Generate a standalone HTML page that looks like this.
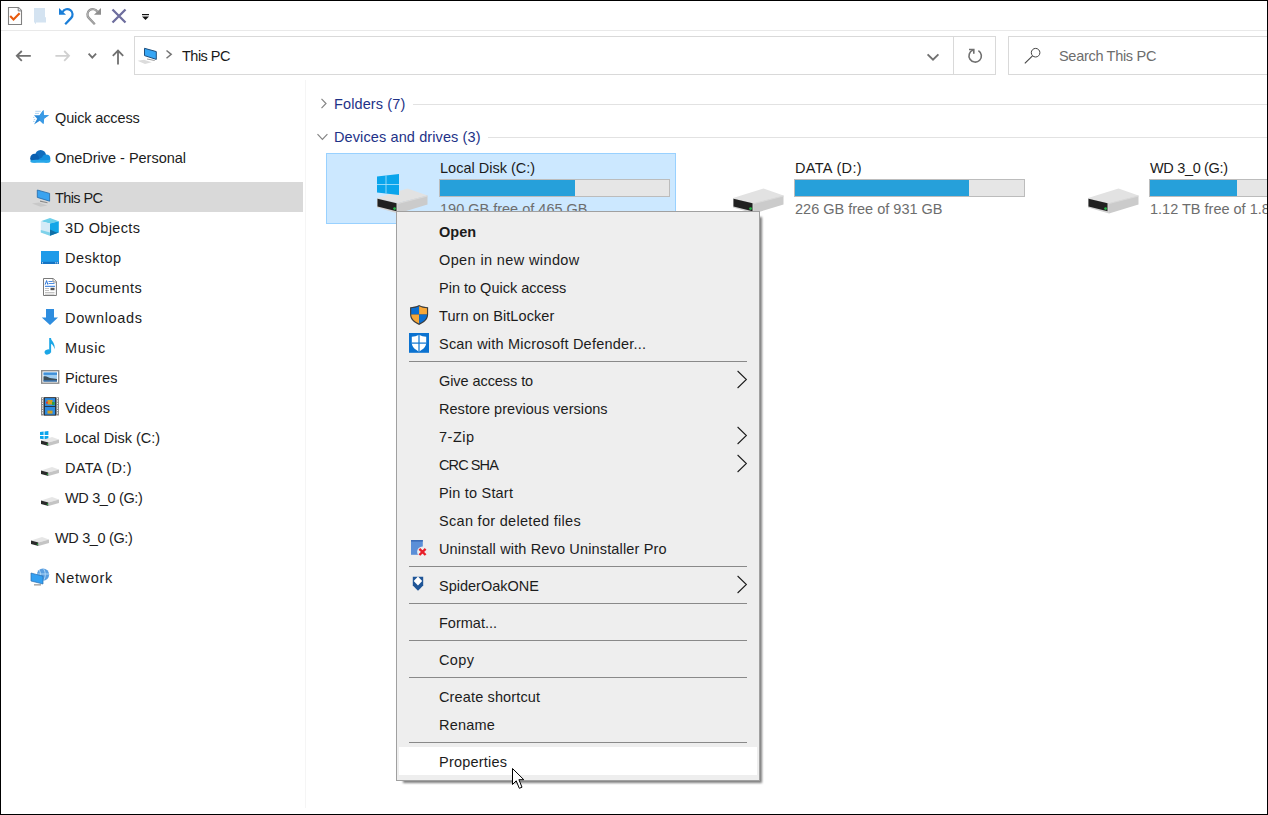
<!DOCTYPE html>
<html><head><meta charset="utf-8">
<style>
*{box-sizing:border-box}
html,body{margin:0;padding:0}
body{width:1268px;height:815px;overflow:hidden;position:relative;background:#fff;font-family:"Liberation Sans",sans-serif;font-size:14.5px;color:#1c1c1c}
.a{position:absolute}
.t{position:absolute;white-space:nowrap;line-height:20px;height:20px}
svg{position:absolute;overflow:visible}
.mz{z-index:11}
.cz{z-index:20}
.frame{position:absolute;left:0;top:0;width:1268px;height:815px;border:1px solid #000;pointer-events:none;z-index:50}
</style></head>
<body>
<div class="a" style="left:1px;top:30px;width:1266px;height:1px;background:#e9e9e9"></div>
<svg style="left:0px;top:0px" width="160" height="30" viewBox="0 0 160 30">
<path d="M8.5,7.5 H18.5 L21.5,10.5 V24.5 H8.5 Z" fill="#fff" stroke="#808080" stroke-width="1.1"/>
<path d="M18.2,7.6 V10.9 H21.5" fill="#e8e8f0" stroke="#808080" stroke-width="1"/>
<polyline points="10.2,16 13.5,19.4 19.6,13.2" fill="none" stroke="#e8590c" stroke-width="2.1"/>
<path d="M34,8 H45 V17.2 H46 V22.5 H36 V23.8 H35 V22.5 H34 Z" fill="#d4e3f1"/>
<polygon points="59,8 59,14.8 66,14.8" fill="#1a7ed8"/>
<path d="M62.6,11.9 A5.3,5.3 0 1 1 71.04,18.14 L65.2,24.3" fill="none" stroke="#1a7ed8" stroke-width="2.2"/>
<polygon points="101,8 101,14.8 94,14.8" fill="#8e8e8e"/>
<path d="M97.4,11.9 A5.3,5.3 0 1 0 88.96,18.14 L94.8,24.3" fill="none" stroke="#8e8e8e" stroke-width="2.3"/><path d="M97.4,11.9 A5.3,5.3 0 1 0 88.96,18.14 L94.8,24.3" fill="none" stroke="#c4c4c4" stroke-width="0.7"/>
<path d="M112.5,9.5 L125.5,22.5 M125.5,9.5 L112.5,22.5" stroke="#6e6e9e" stroke-width="2.3"/>
<rect x="142" y="14" width="7" height="1.2" fill="#111"/>
<polygon points="142,16.5 149,16.5 145.5,20" fill="#111"/>
</svg>
<svg style="left:0px;top:40px" width="134" height="30" viewBox="0 0 134 30">
<path d="M16.5,15.8 H30.8 M21.8,11 L16.8,15.8 L21.8,20.8" fill="none" stroke="#707070" stroke-width="1.8"/>
<path d="M69,15.8 H55.4 M64.2,11 L69,15.8 L64.2,20.8" fill="none" stroke="#d0d0d0" stroke-width="1.8"/>
<path d="M88.6,13.6 L92.3,17.6 L96.1,13.6" fill="none" stroke="#707070" stroke-width="1.8"/>
<path d="M118,10.6 V24.6 M112.8,15.8 L118,10.6 L123.2,15.8" fill="none" stroke="#707070" stroke-width="1.8"/>
</svg>
<div class="a" style="left:134px;top:36px;width:862px;height:39px;border:1px solid #d9d9d9"></div>
<div class="a" style="left:953px;top:36px;width:1px;height:39px;background:#d9d9d9"></div>
<div class="a" style="left:1008px;top:36px;width:270px;height:39px;border:1px solid #d9d9d9"></div>
<svg style="left:134px;top:40px" width="50" height="30" viewBox="0 0 50 30">
<polygon points="3.5,20.8 10,19.8 17.8,22.3 11,24" fill="#dcdcdc"/>
<polygon points="13,18.4 20.7,20 20.7,21 13,19.6" fill="#9a9a9a"/>
<polygon points="10.5,8.3 22.3,11.6 22.3,19.4 10.5,15.6" fill="#35a6f5" stroke="#1e4f7e" stroke-width="1"/>
<path d="M32.5,10.5 L37.2,14.3 L32.5,18.3" fill="none" stroke="#767676" stroke-width="1.5"/>
</svg>
<div class="t" style="left:182px;top:46px;color:#1a1a1a;letter-spacing:-0.52px">This PC</div>
<svg style="left:900px;top:36px" width="110" height="39" viewBox="0 0 110 39">
<path d="M27.6,18.4 L33,23.6 L38.4,18.4" fill="none" stroke="#707070" stroke-width="1.9"/>
<path d="M78.4,14.6 A6.2,6.2 0 1 1 73,14.1" fill="none" stroke="#707070" stroke-width="1.6"/>
<polyline points="69,13.5 73.8,13.5 73.8,17.8" fill="none" stroke="#707070" stroke-width="1.6"/>
</svg>
<svg style="left:1020px;top:40px" width="40" height="30" viewBox="0 0 40 30">
<circle cx="15.6" cy="12.7" r="4.3" fill="none" stroke="#444" stroke-width="1"/>
<line x1="12.5" y1="15.8" x2="4.8" y2="23.4" stroke="#444" stroke-width="1.1"/>
</svg>
<div class="t" style="left:1059px;top:46px;color:#6d6d6d;letter-spacing:-0.3px">Search This PC</div>
<div class="a" style="left:305px;top:80px;width:1px;height:728px;background:#f5f5f5"></div>
<div class="a" style="left:1px;top:182px;width:302px;height:30px;background:#d9d9d9"></div>
<div class="t" style="left:55px;top:108px;letter-spacing:-0.13px">Quick access</div>
<div class="t" style="left:55px;top:148px;letter-spacing:-0.02px">OneDrive - Personal</div>
<div class="t" style="left:55px;top:188px;letter-spacing:-0.6px">This PC</div>
<div class="t" style="left:65px;top:218px;letter-spacing:0.36px">3D Objects</div>
<div class="t" style="left:65px;top:248px;letter-spacing:0.47px">Desktop</div>
<div class="t" style="left:65px;top:278px;letter-spacing:0.42px">Documents</div>
<div class="t" style="left:65px;top:308px;letter-spacing:0.66px">Downloads</div>
<div class="t" style="left:65px;top:338px;letter-spacing:0.6px">Music</div>
<div class="t" style="left:65px;top:368px">Pictures</div>
<div class="t" style="left:65px;top:398px;letter-spacing:0.2px">Videos</div>
<div class="t" style="left:65px;top:428px">Local Disk (C:)</div>
<div class="t" style="left:65px;top:458px;letter-spacing:0.32px">DATA (D:)</div>
<div class="t" style="left:65px;top:488px;letter-spacing:-0.35px">WD 3_0 (G:)</div>
<div class="t" style="left:55px;top:528px;letter-spacing:-0.35px">WD 3_0 (G:)</div>
<div class="t" style="left:55px;top:568px;letter-spacing:0.67px">Network</div>
<svg style="left:26px;top:104px" width="30" height="26" viewBox="0 0 30 26">
<polygon points="17.4,6.1 17.9,11.3 23,11.3 18.2,14.6 17.4,20 13.8,16.8 8,20.4 11.2,14.8 8,11.3 13.6,11.3" fill="#2b8ad8"/>
<polygon points="17.4,6.1 17.9,11.3 23,11.3 18.2,14.6 17.4,20 13.8,16.3 13.6,11.3" fill="#3a9be6"/>
<path d="M9.3,7.3 H14.7 M9,9.4 H13 M7,13.4 H8.4 M7.8,15.5 H9.2 M7,17.4 H8.6" stroke="#9cc8ef" stroke-width="0.8"/>
</svg>
<svg style="left:26px;top:144px" width="30" height="26" viewBox="0 0 30 26">
<circle cx="14.6" cy="11.4" r="5.4" fill="#0f6cbd"/>
<circle cx="8.6" cy="14.2" r="4.4" fill="#0a5fb0"/>
<circle cx="20.2" cy="14.6" r="4.1" fill="#1490df"/>
<path d="M11.5,16.5 C14,14 17,12.6 20.5,12.8 C22.5,13 24.2,14.5 24.2,16 V17 H11.5 Z" fill="#1490df"/>
<path d="M4.3,16.5 C8,15.6 12,15.8 16,16.2 C19,16.4 22,16 24.3,15.8 V17 C24.3,18 23.4,18.8 22.2,18.8 H6.4 C5.2,18.8 4.2,17.8 4.3,16.5 Z" fill="#28a8ea"/>
</svg>
<svg style="left:28px;top:184px" width="32" height="26" viewBox="0 0 32 26">
<polygon points="4,19.4 11,18.6 19.5,21.6 12.5,22.8" fill="#c8c8c8"/>
<polygon points="12,16.6 19.5,18.2 19.5,19.2 12,17.8" fill="#8a8a8a"/>
<polygon points="9.3,6 21.6,9.4 21.6,17.2 9.3,13.4" fill="#3aa3f0" stroke="#2468a6" stroke-width="0.8"/>
</svg>
<svg style="left:36px;top:214px" width="26" height="26" viewBox="0 0 26 26">
<polygon points="4.8,7.3 14,4 22.8,7.3 14,9.6" fill="#6dd0ea"/>
<polygon points="4.8,7.3 14,9.6 14,21.7 4.8,18.5" fill="#d4ebf7"/>
<polygon points="4.8,16 14,18.6 14,21.7 4.8,18.5" fill="#7fd2ea"/>
<polygon points="14,9.6 22.8,7.3 22.8,18.5 14,21.7" fill="#13a6e8"/>
<polygon points="14,15.6 20,18.2 22.8,18.5 14,21.7" fill="#106fa6"/>
</svg>
<svg style="left:36px;top:246px" width="26" height="20" viewBox="0 0 26 20">
<rect x="5" y="5" width="18" height="13" fill="#1e9be9"/>
<rect x="5" y="15.8" width="18" height="2.2" fill="#1473c4"/>
<circle cx="6.5" cy="16.8" r="0.6" fill="#fff"/><circle cx="19.8" cy="16.8" r="0.6" fill="#fff"/><circle cx="21.6" cy="16.8" r="0.6" fill="#fff"/>
</svg>
<svg style="left:36px;top:276px" width="26" height="22" viewBox="0 0 26 22">
<path d="M7.5,2.5 H17.3 L20.4,5.6 V19.5 H7.5 Z" fill="#fff" stroke="#7a7a7a" stroke-width="1"/>
<path d="M17,2.5 V6 H20.4" fill="#eee" stroke="#7a7a7a" stroke-width="0.8"/>
<path d="M9.2,8.6 L10.6,4.6 L11.8,8.6" fill="none" stroke="#2673d9" stroke-width="1"/>
<rect x="12.5" y="5.2" width="4" height="0.8" fill="#2673d9"/><rect x="12.5" y="7.2" width="6" height="0.8" fill="#2673d9"/>
<rect x="9" y="9.8" width="10" height="1" fill="#2673d9"/>
<rect x="9" y="12" width="4" height="0.6" fill="#9a9a9a"/><rect x="14.5" y="11.8" width="4" height="2.4" fill="#555"/>
<rect x="9" y="14" width="4" height="0.6" fill="#9a9a9a"/>
<rect x="9" y="16" width="9.5" height="0.6" fill="#9a9a9a"/><rect x="9" y="17.8" width="9.5" height="0.6" fill="#9a9a9a"/>
</svg>
<svg style="left:36px;top:306px" width="26" height="22" viewBox="0 0 26 22">
<polygon points="10,2.9 18,2.9 18,11.4 22,11.4 14,19 5.8,11.4 10,11.4" fill="#2e8ddf"/>
</svg>
<svg style="left:36px;top:336px" width="26" height="22" viewBox="0 0 26 22">
<ellipse cx="11.6" cy="16" rx="3.1" ry="2.5" fill="#1ba6e6" transform="rotate(-20 11.6 16)"/>
<rect x="13.2" y="2" width="1.9" height="14.5" fill="#1ba6e6"/>
<path d="M14.6,2.2 C15.5,5 19.6,7 18.6,13.6 C18.2,12 17.6,9 14.6,7.6 Z" fill="#1ba6e6"/>
</svg>
<svg style="left:36px;top:366px" width="26" height="22" viewBox="0 0 26 22">
<rect x="5.7" y="4.7" width="17" height="12.5" fill="#fff" stroke="#8c8c8c" stroke-width="1.4"/>
<rect x="7.5" y="6.5" width="13.5" height="9" fill="#9fcdf0"/>
<rect x="7.5" y="6.5" width="13.5" height="2.4" fill="#3e8fd8"/>
<path d="M7.5,10.5 C10,9.5 12,11 14,12 C16,12.4 19,12.6 21,13 V15.5 H7.5 Z" fill="#3d4e58"/>
<rect x="7.5" y="14.4" width="13.5" height="1.1" fill="#3f84d0"/>
</svg>
<svg style="left:36px;top:396px" width="26" height="22" viewBox="0 0 26 22">
<rect x="5" y="1.3" width="18" height="18.2" fill="#8a8a8a"/>
<rect x="8" y="1.3" width="12" height="18.2" fill="#222"/>
<rect x="8.8" y="2.1" width="10.4" height="16.6" fill="#2e8be0"/>
<rect x="11.5" y="4" width="5" height="4.5" fill="#d4a020"/><rect x="10" y="5.6" width="2" height="2" fill="#e04030"/><rect x="16" y="6" width="2.6" height="3" fill="#30a040"/>
<rect x="11.5" y="14.6" width="5" height="3" fill="#d4a020"/>
<rect x="8.8" y="10.1" width="10.4" height="0.8" fill="#222"/>
<path d="M6,2.6 H7 M6,5 H7 M6,7.4 H7 M6,9.8 H7 M6,12.2 H7 M6,14.6 H7 M6,17 H7 M21,2.6 H22 M21,5 H22 M21,7.4 H22 M21,9.8 H22 M21,12.2 H22 M21,14.6 H22 M21,17 H22" stroke="#f4f4f4" stroke-width="1.3"/>
</svg>
<svg style="left:40px;top:431px" width="9" height="9" viewBox="0 0 9 9"><polygon points="0,1 3.6,0.5 3.6,3.9 0,3.9" fill="#0aa5ec"/><polygon points="4.6,0.4 8.4,0 8.4,3.9 4.6,3.9" fill="#0aa5ec"/><polygon points="0,4.9 3.6,4.9 3.6,8.2 0,7.8" fill="#0aa5ec"/><polygon points="4.6,4.9 8.4,4.9 8.4,8.6 4.6,8.3" fill="#0aa5ec"/></svg>
<svg style="left:40.5px;top:437px" width="18" height="9" viewBox="0 0 18 9">
  <polygon points="0,3.5 11,0 18,2.5 7.5,5.5" fill="#e6e6e6"/>
  <polygon points="0,3.5 7.5,5.5 7.5,9 0,7" fill="#2a2a2a"/>
  <polygon points="7.5,5.5 18,2.5 18,6 7.5,9" fill="#c4c4c4"/>
  <circle cx="6.5" cy="7.2" r="0.7" fill="#22c040"/>
</svg>
<svg style="left:40.5px;top:467px" width="18" height="9" viewBox="0 0 18 9">
  <polygon points="0,3.5 11,0 18,2.5 7.5,5.5" fill="#e6e6e6"/>
  <polygon points="0,3.5 7.5,5.5 7.5,9 0,7" fill="#2a2a2a"/>
  <polygon points="7.5,5.5 18,2.5 18,6 7.5,9" fill="#c4c4c4"/>
  <circle cx="6.5" cy="7.2" r="0.7" fill="#22c040"/>
</svg>
<svg style="left:40.5px;top:497px" width="18" height="9" viewBox="0 0 18 9">
  <polygon points="0,3.5 11,0 18,2.5 7.5,5.5" fill="#e6e6e6"/>
  <polygon points="0,3.5 7.5,5.5 7.5,9 0,7" fill="#2a2a2a"/>
  <polygon points="7.5,5.5 18,2.5 18,6 7.5,9" fill="#c4c4c4"/>
  <circle cx="6.5" cy="7.2" r="0.7" fill="#22c040"/>
</svg>
<svg style="left:30.5px;top:536.5px" width="18" height="9" viewBox="0 0 18 9">
  <polygon points="0,3.5 11,0 18,2.5 7.5,5.5" fill="#e6e6e6"/>
  <polygon points="0,3.5 7.5,5.5 7.5,9 0,7" fill="#2a2a2a"/>
  <polygon points="7.5,5.5 18,2.5 18,6 7.5,9" fill="#c4c4c4"/>
  <circle cx="6.5" cy="7.2" r="0.7" fill="#22c040"/>
</svg>
<svg style="left:26px;top:564px" width="30" height="26" viewBox="0 0 30 26">
<circle cx="17" cy="10.6" r="6.2" fill="#5a9ee0"/>
<path d="M13,6 C15,8 15,13 12.8,15.5 M17,4.5 C20,7 20,14 17,16.8 M11,10 H23" fill="none" stroke="#b8dcf8" stroke-width="0.9"/>
<polygon points="5,9 17,12.2 17,20 5,17" fill="#33a0f2" stroke="#2a6eb0" stroke-width="0.7"/>
<rect x="8" y="20.2" width="7" height="1.3" fill="#9a9a9a"/>
</svg>
<svg style="left:310px;top:90px" width="30" height="60" viewBox="0 0 30 60">
<path d="M321.5,98.8 L326,103.5 L321.5,108.2" transform="translate(-310,-90)" fill="none" stroke="#858585" stroke-width="1.2"/>
<path d="M317.5,134.2 L322.4,139.4 L327.4,134.2" transform="translate(-310,-90)" fill="none" stroke="#858585" stroke-width="1.2"/>
</svg>
<div class="t" style="left:334px;top:94px;color:#1e3287;letter-spacing:0.12px">Folders (7)</div>
<div class="a" style="left:413px;top:104px;width:860px;height:1px;background:#e2e2e2"></div>
<div class="t" style="left:334px;top:127px;color:#1e3287;letter-spacing:0.11px">Devices and drives (3)</div>
<div class="a" style="left:488px;top:137px;width:780px;height:1px;background:#e2e2e2"></div>
<div class="a" style="left:326px;top:153px;width:350px;height:71px;background:#cce8ff;border:1px solid #99d1ff"></div>
<div class="t" style="left:440px;top:158px">Local Disk (C:)</div>
<div class="a" style="left:439px;top:179px;width:231px;height:18px;background:#e6e6e6;border:1px solid #bcbcbc"></div>
<div class="a" style="left:440px;top:180px;width:135px;height:16px;background:#26a0da"></div>
<div class="t" style="left:440px;top:199px;color:#6d6d6d">190 GB free of 465 GB</div>
<svg style="left:377px;top:188px" width="51" height="26" viewBox="0 0 51 26">
  <polygon points="0,10 30.5,0.5 50.5,7.5 21,15" fill="#e2e2e2"/>
  <polygon points="0,10 21,15 21,25.5 0,19.5" fill="#d2d2d2"/>
  <polygon points="0.5,10.8 19.5,15.2 19.5,23.2 0.5,18.4" fill="#202020"/>
  <polygon points="21,15 50.5,7.5 50.5,16.5 21,25.5" fill="#cbcbcb"/>
  <polygon points="21,15 50.5,7.5 50.5,8.5 21,16" fill="#dadada"/>
  <circle cx="17.6" cy="20.6" r="1.4" fill="#25b545"/>
</svg>
<div class="t" style="left:795px;top:158px;letter-spacing:0.34px">DATA (D:)</div>
<div class="a" style="left:794px;top:179px;width:231px;height:18px;background:#e6e6e6;border:1px solid #bcbcbc"></div>
<div class="a" style="left:795px;top:180px;width:174px;height:16px;background:#26a0da"></div>
<div class="t" style="left:795px;top:199px;color:#6d6d6d">226 GB free of 931 GB</div>
<svg style="left:733px;top:188px" width="51" height="26" viewBox="0 0 51 26">
  <polygon points="0,10 30.5,0.5 50.5,7.5 21,15" fill="#e2e2e2"/>
  <polygon points="0,10 21,15 21,25.5 0,19.5" fill="#d2d2d2"/>
  <polygon points="0.5,10.8 19.5,15.2 19.5,23.2 0.5,18.4" fill="#202020"/>
  <polygon points="21,15 50.5,7.5 50.5,16.5 21,25.5" fill="#cbcbcb"/>
  <polygon points="21,15 50.5,7.5 50.5,8.5 21,16" fill="#dadada"/>
  <circle cx="17.6" cy="20.6" r="1.4" fill="#25b545"/>
</svg>
<div class="t" style="left:1150px;top:158px;letter-spacing:-0.33px">WD 3_0 (G:)</div>
<div class="a" style="left:1149px;top:179px;width:231px;height:18px;background:#e6e6e6;border:1px solid #bcbcbc"></div>
<div class="a" style="left:1150px;top:180px;width:87px;height:16px;background:#26a0da"></div>
<div class="t" style="left:1150px;top:199px;color:#6d6d6d">1.12 TB free of 1.81 TB</div>
<svg style="left:1088px;top:188px" width="51" height="26" viewBox="0 0 51 26">
  <polygon points="0,10 30.5,0.5 50.5,7.5 21,15" fill="#e2e2e2"/>
  <polygon points="0,10 21,15 21,25.5 0,19.5" fill="#d2d2d2"/>
  <polygon points="0.5,10.8 19.5,15.2 19.5,23.2 0.5,18.4" fill="#202020"/>
  <polygon points="21,15 50.5,7.5 50.5,16.5 21,25.5" fill="#cbcbcb"/>
  <polygon points="21,15 50.5,7.5 50.5,8.5 21,16" fill="#dadada"/>
  <circle cx="17.6" cy="20.6" r="1.4" fill="#25b545"/>
</svg>
<svg style="left:377px;top:174px" width="22" height="21" viewBox="0 0 22 21">
  <polygon points="0,2.5 22,0 22,21 0,18.5" fill="#0aa5ec"/>
  <line x1="9" y1="1.5" x2="9" y2="19.5" stroke="#9fdcf8" stroke-width="0.9"/>
  <line x1="0" y1="10.5" x2="22" y2="10.5" stroke="#9fdcf8" stroke-width="0.9"/>
</svg>
<div class="a" style="left:403px;top:217px;width:359.3px;height:566.3px;background:rgba(0,0,0,0.5);filter:blur(1.2px);z-index:10"></div>
<div class="a mz" style="left:396px;top:211px;width:364px;height:570px;background:#eeeeee;border:1px solid #a0a0a0"></div>
<div class="t mz" style="left:439px;top:222px;font-weight:bold">Open</div>
<div class="t mz" style="left:439px;top:250px;letter-spacing:0.38px">Open in new window</div>
<div class="t mz" style="left:439px;top:278px">Pin to Quick access</div>
<div class="t mz" style="left:439px;top:306px;letter-spacing:0.09px">Turn on BitLocker</div>
<svg class="mz" style="left:408px;top:301px" width="24" height="28" viewBox="0 0 24 28"><g transform="translate(0.6,0.9) scale(1.05)"><path d="M10,3 C12.5,4.5 16,4.8 18.6,5 V12 C18.6,16.8 14.8,19.8 10,22 C5.2,19.8 1.4,16.8 1.4,12 V5 C4,4.8 7.5,4.5 10,3 Z" fill="#3b3b3b"/>
<path d="M10,4.2 C7.8,5.5 5,5.8 2.5,6 V12 H10 Z" fill="#0a6ed1"/>
<path d="M10,4.2 C12.2,5.5 15,5.8 17.5,6 V12 H10 Z" fill="#f7a737"/>
<path d="M2.5,12 H10 V20.6 C6,18.8 2.5,16.2 2.5,12 Z" fill="#f7a737"/>
<path d="M17.5,12 H10 V20.6 C14,18.8 17.5,16.2 17.5,12 Z" fill="#0a6ed1"/></g></svg>
<div class="t mz" style="left:439px;top:334px;letter-spacing:0.21px">Scan with Microsoft Defender...</div>
<svg class="mz" style="left:408px;top:329px" width="24" height="28" viewBox="0 0 24 28"><rect x="1" y="4" width="20" height="19.8" fill="#0b72d0"/>
<path d="M11,5.8 C13.2,7.2 15.8,7.6 18.2,7.7 V13.8 C18.2,17.8 15,20.6 11,22.4 C7,20.6 3.8,17.8 3.8,13.8 V7.7 C6.2,7.6 8.8,7.2 11,5.8 Z" fill="#fff"/>
<rect x="10.4" y="5.8" width="1.2" height="16.6" fill="#0b72d0"/><rect x="3.8" y="13.5" width="14.4" height="1.2" fill="#0b72d0"/></svg>
<div class="a mz" style="left:409px;top:361px;width:338px;height:1px;background:#898989"></div>
<div class="t mz" style="left:439px;top:371px;letter-spacing:-0.07px">Give access to</div>
<svg class="mz" style="left:730px;top:366px" width="24" height="28" viewBox="0 0 24 28"><polyline points="7.6,5 16.4,13.5 7.6,22" fill="none" stroke="#1a1a1a" stroke-width="1.05"/></svg>
<div class="t mz" style="left:439px;top:399px;letter-spacing:0.04px">Restore previous versions</div>
<div class="t mz" style="left:439px;top:427px;letter-spacing:0.5px">7-Zip</div>
<svg class="mz" style="left:730px;top:422px" width="24" height="28" viewBox="0 0 24 28"><polyline points="7.6,5 16.4,13.5 7.6,22" fill="none" stroke="#1a1a1a" stroke-width="1.05"/></svg>
<div class="t mz" style="left:439px;top:455px;letter-spacing:-0.9px">CRC SHA</div>
<svg class="mz" style="left:730px;top:450px" width="24" height="28" viewBox="0 0 24 28"><polyline points="7.6,5 16.4,13.5 7.6,22" fill="none" stroke="#1a1a1a" stroke-width="1.05"/></svg>
<div class="t mz" style="left:439px;top:483px;letter-spacing:0.2px">Pin to Start</div>
<div class="t mz" style="left:439px;top:511px;letter-spacing:0.3px">Scan for deleted files</div>
<div class="t mz" style="left:439px;top:539px;letter-spacing:0.15px">Uninstall with Revo Uninstaller Pro</div>
<svg class="mz" style="left:408px;top:534px" width="24" height="28" viewBox="0 0 24 28"><rect x="3" y="6" width="11.8" height="14.8" fill="#5b8fd8"/>
<rect x="3" y="6" width="11.8" height="1.6" fill="#3c6db8"/>
<circle cx="14.5" cy="17.8" r="5.4" fill="#eeeeee"/>
<path d="M11.4,14.8 L17.6,21 M17.6,14.8 L11.4,21" stroke="#e8202a" stroke-width="2.4"/></svg>
<div class="a mz" style="left:409px;top:566px;width:338px;height:1px;background:#898989"></div>
<div class="t mz" style="left:439px;top:576px">SpiderOakONE</div>
<svg class="mz" style="left:408px;top:571px" width="24" height="28" viewBox="0 0 24 28"><path d="M4.8,5.7 H15.2 V14.4 L10,19.8 L4.8,14.4 Z" fill="#1f5597"/>
<polygon points="9.95,5.4 14.2,10 9.95,14.6 5.7,10" fill="#fff"/></svg>
<svg class="mz" style="left:730px;top:571px" width="24" height="28" viewBox="0 0 24 28"><polyline points="7.6,5 16.4,13.5 7.6,22" fill="none" stroke="#1a1a1a" stroke-width="1.05"/></svg>
<div class="a mz" style="left:409px;top:603px;width:338px;height:1px;background:#898989"></div>
<div class="t mz" style="left:439px;top:613px">Format...</div>
<div class="a mz" style="left:409px;top:640px;width:338px;height:1px;background:#898989"></div>
<div class="t mz" style="left:439px;top:650px;letter-spacing:0.4px">Copy</div>
<div class="a mz" style="left:409px;top:677px;width:338px;height:1px;background:#898989"></div>
<div class="t mz" style="left:439px;top:687px;letter-spacing:0.14px">Create shortcut</div>
<div class="t mz" style="left:439px;top:715px;letter-spacing:0.2px">Rename</div>
<div class="a mz" style="left:409px;top:742px;width:338px;height:1px;background:#898989"></div>
<div class="a mz" style="left:399px;top:747px;width:358px;height:28px;background:#fff"></div>
<div class="t mz" style="left:439px;top:752px;letter-spacing:0.22px">Properties</div>
<svg class="cz" style="left:512px;top:768px" width="14" height="22" viewBox="0 0 14 22"><path d="M0.5,0.5 V16.5 L4.2,12.8 L7.3,20.3 L10,19.2 L6.9,11.7 L11.8,11.7 Z" fill="#fff" stroke="#000" stroke-width="1"/></svg>
<div class="frame"></div>
</body></html>
